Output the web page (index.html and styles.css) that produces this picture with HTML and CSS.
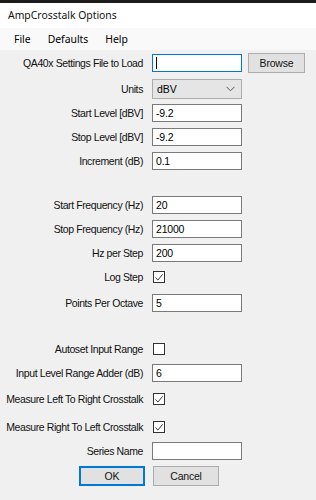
FILE: index.html
```html
<!DOCTYPE html>
<html>
    <head>
        <title>AmpCrosstalk Options</title>
        <link rel="stylesheet" href="styles.css">
    </head>
    <body>
        <div class="topStrip"></div>
        <div class="titleBar">AmpCrosstalk Options</div>
        <div class="menuBar">
            <span class="menuItem">File</span>
            <span class="menuItem">Defaults</span>
            <span class="menuItem">Help</span>
        </div>
        <form class="options">
            <div class="row">
                <label class="labelInfo">QA40x Settings File to Load</label>
                <div class="textBox focused"><span class="caret"></span></div>
                <button type="button" class="button browse">Browse</button>
            </div>
            <div class="row gap2">
                <label class="labelInfo">Units</label>
                <div class="combo">
                    <span>dBV</span>
                    <svg width="9" height="6" viewBox="0 0 9 6"><path d="M0.5 0.8 L4.5 4.8 L8.5 0.8" fill="none" stroke="#555" stroke-width="1"/></svg>
                </div>
            </div>
            <div class="row">
                <label class="labelInfo">Start Level [dBV]</label>
                <div class="textBox">-9.2</div>
            </div>
            <div class="row">
                <label class="labelInfo">Stop Level [dBV]</label>
                <div class="textBox">-9.2</div>
            </div>
            <div class="row">
                <label class="labelInfo">Increment (dB)</label>
                <div class="textBox">0.1</div>
            </div>

            <div class="row section">
                <label class="labelInfo">Start Frequency (Hz)</label>
                <div class="textBox">20</div>
            </div>
            <div class="row">
                <label class="labelInfo">Stop Frequency (Hz)</label>
                <div class="textBox">21000</div>
            </div>
            <div class="row">
                <label class="labelInfo">Hz per Step</label>
                <div class="textBox">200</div>
            </div>
            <div class="row">
                <label class="labelInfo">Log Step</label>
                <div class="check"><svg width="11" height="11" viewBox="0 0 11 11"><path d="M1.5 5.5 L4.3 8.3 L9.5 2" fill="none" stroke="#222" stroke-width="1"/></svg></div>
            </div>
            <div class="row gap2">
                <label class="labelInfo">Points Per Octave</label>
                <div class="textBox">5</div>
            </div>

            <div class="row section2">
                <label class="labelInfo">Autoset Input Range</label>
                <div class="check"></div>
            </div>
            <div class="row">
                <label class="labelInfo">Input Level Range Adder (dB)</label>
                <div class="textBox">6</div>
            </div>
            <div class="row gap2">
                <label class="labelInfo">Measure Left To Right Crosstalk</label>
                <div class="check"><svg width="11" height="11" viewBox="0 0 11 11"><path d="M1.5 5.5 L4.3 8.3 L9.5 2" fill="none" stroke="#222" stroke-width="1"/></svg></div>
            </div>
            <div class="row gap4">
                <label class="labelInfo">Measure Right To Left Crosstalk</label>
                <div class="check"><svg width="11" height="11" viewBox="0 0 11 11"><path d="M1.5 5.5 L4.3 8.3 L9.5 2" fill="none" stroke="#222" stroke-width="1"/></svg></div>
            </div>
            <div class="row">
                <label class="labelInfo">Series Name</label>
                <div class="textBox"></div>
            </div>
            <div class="buttonRow">
                <button type="button" class="button ok">OK</button>
                <button type="button" class="button cancel">Cancel</button>
            </div>
        </form>
    </body>
</html>
```

FILE: styles.css
```css
body {
    margin: 0;
    width: 316px;
    height: 500px;
    background-color: #f0f0f0;
    font-family: "Liberation Sans", Arial, sans-serif;
    color: #000;
    overflow: hidden;
}

.topStrip {
    height: 3px;
    background-color: #1c1c1c;
}

.titleBar {
    height: 25px;
    line-height: 25px;
    padding-left: 8px;
    background-color: #fff;
    font-family: "Noto Sans", sans-serif;
    font-size: 10.4px;
    color: #111;
}

.menuBar {
    display: flex;
    gap: 17px;
    height: 22px;
    align-items: center;
    padding-left: 14px;
    background-color: #f9f9f9;
    font-family: "Noto Sans", sans-serif;
    font-size: 10.4px;
}

.options {
    display: flex;
    flex-direction: column;
    gap: 4px;
    padding-top: 3px;
    margin: 0;
}

.row {
    display: flex;
    align-items: center;
    height: 20px;
}

.gap2 {
    margin-top: 2px;
}

.gap4 {
    margin-top: 4px;
}

.section {
    margin-top: 20px;
}

.section2 {
    margin-top: 22px;
}

.labelInfo {
    width: 143px;
    flex-shrink: 0;
    text-align: right;
    white-space: nowrap;
    font-size: 10.5px;
    letter-spacing: -0.4px;
    color: #111;
    margin-right: 9px;
}

.textBox {
    box-sizing: border-box;
    width: 90px;
    height: 18px;
    border: 1px solid #7a7a7a;
    background-color: #fff;
    padding-left: 3px;
    font-size: 10.5px;
    line-height: 16px;
    letter-spacing: -0.2px;
}

.focused {
    border-color: #0078d7;
}

.caret {
    display: inline-block;
    width: 1px;
    height: 12px;
    margin-top: 2px;
    background-color: #000;
    vertical-align: top;
}

.combo {
    box-sizing: border-box;
    width: 90px;
    height: 20px;
    border: 1px solid #adadad;
    background-color: #e5e5e5;
    display: flex;
    align-items: center;
    justify-content: space-between;
    padding: 0 6px 0 4px;
    font-size: 10.5px;
}

.check {
    box-sizing: border-box;
    width: 12px;
    height: 12px;
    margin-left: 1px;
    border: 1px solid #333;
    background-color: #fff;
    display: flex;
}

.button {
    box-sizing: border-box;
    height: 20px;
    border: 1px solid #adadad;
    background-color: #e1e1e1;
    font-family: "Liberation Sans", Arial, sans-serif;
    font-size: 10.5px;
    letter-spacing: -0.2px;
    color: #111;
    padding: 0;
}

.browse {
    width: 57px;
    margin-left: 6px;
}

.buttonRow {
    display: flex;
    gap: 8px;
    padding-left: 79px;
    margin-top: 1px;
}

.ok {
    width: 66px;
    border: 2px solid #0078d7;
}

.cancel {
    width: 66px;
}
```
